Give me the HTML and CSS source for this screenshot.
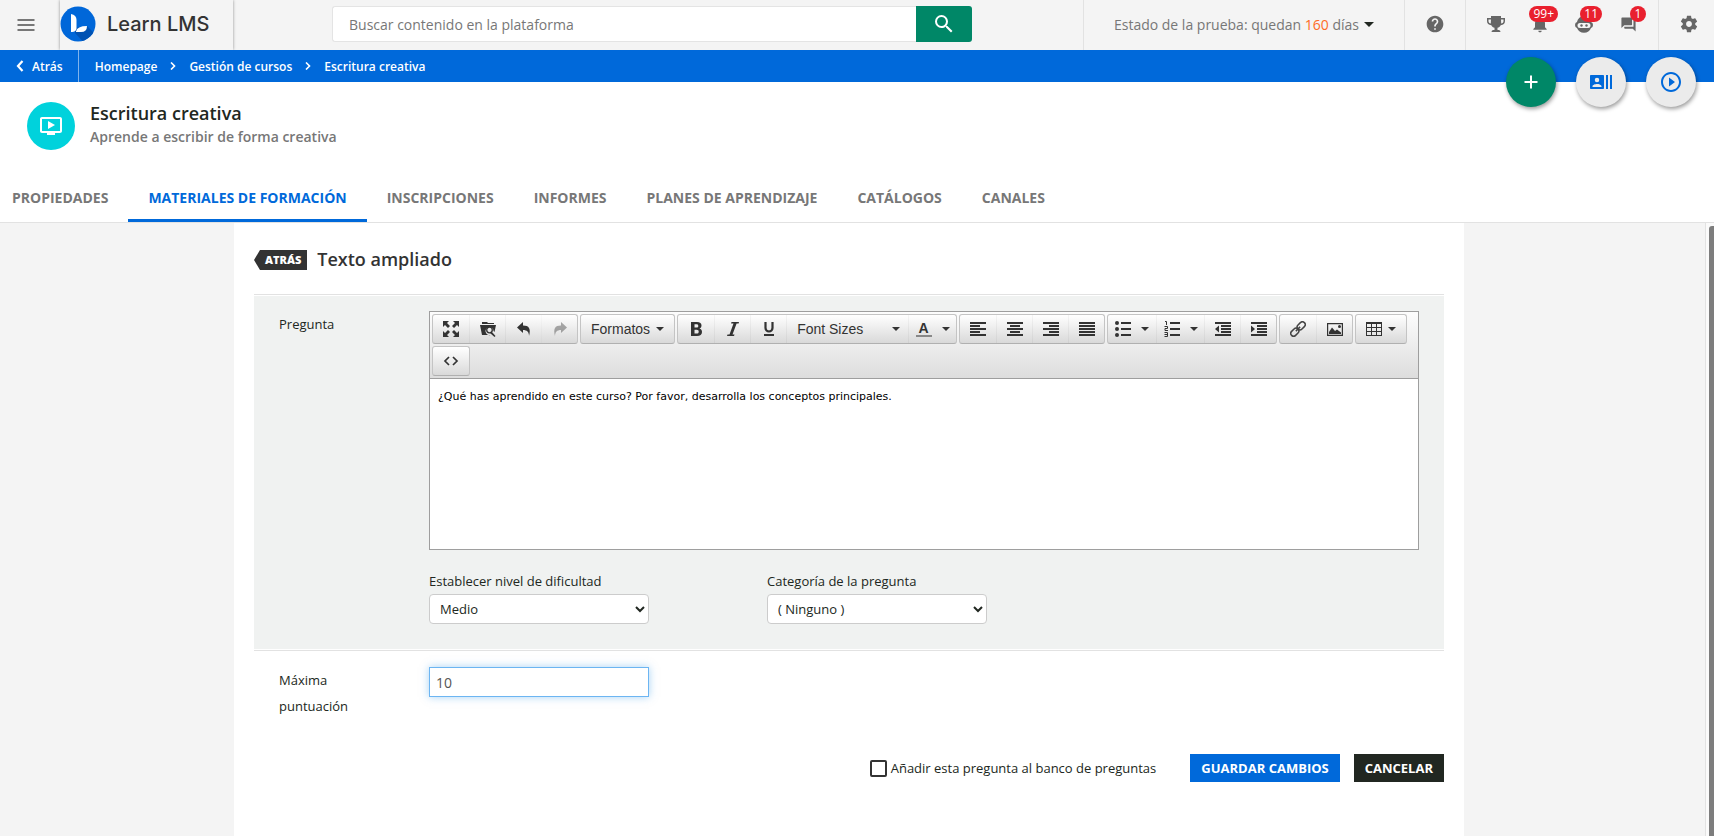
FILE: index.html
```html
<!DOCTYPE html>
<html lang="es">
<head>
  <meta charset="UTF-8" />
  <meta name="viewport" content="width=device-width, initial-scale=1.0"/>
  <title>Learn LMS - Escritura creativa</title>
  <link rel="stylesheet" href="styles.css">
</head>
<body>
  <header class="topbar">
    <button class="icon-btn menu-btn" type="button" aria-label="Menú">
      <svg width="24" height="24" viewBox="0 0 24 24"><path d="M3.500 18h17v-2h-17v2zm0-5h17v-2h-17v2zm0-7v2h17V6h-17z"/></svg>
    </button>
    <a class="logo" href="#">
      <svg width="36" height="36" viewBox="0 0 36 36">
        <defs><clipPath id="logoClip"><circle cx="18" cy="18" r="17.500"/></clipPath></defs>
        <circle cx="18" cy="18" r="17.500" fill="#0067d9"/>
        <path clip-path="url(#logoClip)" d="M15 22l12-2 12 12-10 10-14-15z" fill="#0052b3"/>
        <path d="M11 8q5.500 1 5.500 6v9q-1 3.500-5.500 3z" fill="#fff"/>
        <path d="M16 25.500q1-5.500 11-5.500 0 6-6 6h-5z" fill="#fff"/>
      </svg>
      <span>Learn LMS</span>
    </a>
    <form class="search">
      <input type="text" placeholder="Buscar contenido en la plataforma" aria-label="Buscar contenido en la plataforma">
      <button type="button" aria-label="Buscar">
        <svg width="24" height="24" viewBox="0 0 24 24"><path d="M15.500 14h-.79l-.28-.27A6.470 6.470 0 0 0 16 9.500 6.500 6.500 0 1 0 9.500 16c1.610 0 3.090-.59 4.230-1.570l.27.280v.790l5 4.990L20.490 19l-4.990-5zm-6 0C7.010 14 5 11.990 5 9.500S7.010 5 9.500 5 14 7.010 14 9.500 11.990 14 9.500 14z"/></svg>
      </button>
    </form>
    <button class="trial" type="button">
      <span>Estado de la prueba: quedan <b>160</b> días</span><i class="caret"></i>
    </button>
    <div class="top-group">
      <button class="icon-btn" type="button" aria-label="Ayuda">
        <svg width="20" height="20" viewBox="0 0 24 24"><path d="M12 2C6.480 2 2 6.480 2 12s4.480 10 10 10 10-4.480 10-10S17.520 2 12 2zm1 17h-2v-2h2v2zm2.070-7.750l-.9.920C13.450 12.900 13 13.500 13 15h-2v-.5c0-1.100.450-2.100 1.170-2.830l1.240-1.260c.370-.36.590-.86.590-1.410 0-1.100-.9-2-2-2s-2 .9-2 2H8c0-2.210 1.790-4 4-4s4 1.790 4 4c0 .880-.36 1.680-.93 2.250z"/></svg>
      </button>
    </div>
    <div class="top-group">
      <button class="icon-btn" type="button" aria-label="Logros">
        <svg width="18" height="18" viewBox="0 0 18 18"><path d="M4 1h10v2h4v3c0 2.500-1.600 4-4.300 4.200-.8 1.400-1.900 2.200-3.200 2.500V15H12q1.500.4 1.500 2h-9q0-1.600 1.500-2h1.500v-2.300c-1.300-.3-2.400-1.100-3.200-2.500C1.600 10 0 8.500 0 6V3h4V1zm0 3.500H1.500V6c0 1.400.8 2.300 2.300 2.600C3.700 7.400 4 6 4 4.500zm10 0c0 1.500.3 2.900.2 4.100 1.500-.3 2.300-1.200 2.300-2.600V4.500H14z"/></svg>
      </button>
      <button class="icon-btn" type="button" aria-label="Notificaciones">
        <svg width="20" height="20" viewBox="0 0 24 24"><path d="M12 22c1.100 0 2-.9 2-2h-4c0 1.100.9 2 2 2zm6-6v-5c0-3.070-1.630-5.640-4.500-6.320V4a1.500 1.500 0 0 0-3 0v.680C7.640 5.360 6 7.920 6 11v5l-2 2v1h16v-1l-2-2z"/></svg>
        <span class="badge">99+</span>
      </button>
      <button class="icon-btn" type="button" aria-label="Asistente">
        <svg width="18" height="18" viewBox="0 0 18 18"><path fill-rule="evenodd" d="M9 1a7 7 0 0 1 7 6q2 .5 2 3t-2 3a7.500 7.500 0 0 1-14 0q-2-.5-2-3t2-3a7 7 0 0 1 7-6zM5 8a2.500 2.500 0 0 0 0 5h8a2.500 2.500 0 0 0 0-5z"/><circle cx="6.500" cy="10.500" r="1.200"/><circle cx="11.500" cy="10.500" r="1.200"/></svg>
        <span class="badge">11</span>
      </button>
      <button class="icon-btn" type="button" aria-label="Mensajes">
        <svg width="17" height="17" viewBox="0 0 24 24"><path d="M21 6h-2v9H6v2c0 .550.450 1 1 1h11l4 4V7c0-.55-.45-1-1-1zm-4 6V3c0-.55-.45-1-1-1H3c-.55 0-1 .450-1 1v14l4-4h10c.550 0 1-.45 1-1z"/></svg>
        <span class="badge">1</span>
      </button>
    </div>
    <div class="top-group">
      <button class="icon-btn" type="button" aria-label="Configuración">
        <svg width="20" height="20" viewBox="0 0 24 24"><path d="M19.430 12.980c.04-.32.07-.64.07-.98s-.03-.66-.07-.98l2.110-1.650c.19-.15.24-.42.12-.64l-2-3.460c-.12-.22-.39-.3-.61-.22l-2.490 1c-.52-.4-1.080-.73-1.690-.98l-.38-2.650C14.460 2.180 14.250 2 14 2h-4c-.25 0-.46.180-.49.420l-.38 2.650c-.61.250-1.170.590-1.690.980l-2.490-1c-.23-.09-.49 0-.61.220l-2 3.460c-.13.220-.07.490.12.640l2.110 1.650c-.04.320-.07.650-.07.980s.03.660.07.980l-2.110 1.650c-.19.150-.24.420-.12.640l2 3.460c.12.220.39.300.61.220l2.490-1c.52.400 1.080.730 1.690.980l.38 2.650c.03.240.24.420.49.420h4c.25 0 .46-.18.49-.42l.38-2.650c.61-.25 1.170-.59 1.690-.98l2.490 1c.23.090.49 0 .61-.22l2-3.460c.12-.22.07-.49-.12-.64l-2.110-1.650zM12 15.500c-1.930 0-3.500-1.570-3.500-3.500s1.570-3.500 3.500-3.500 3.500 1.570 3.500 3.500-1.570 3.500-3.500 3.500z"/></svg>
      </button>
    </div>
  </header>

  <nav class="crumbs">
    <a class="crumb-back" href="#">
      <svg width="8" height="12" viewBox="0 0 8 12"><path d="M6.500 1L2 6l4.500 5" fill="none" stroke="#fff" stroke-width="2.200"/></svg>
      Atrás
    </a>
    <a href="#">Homepage</a>
    <svg width="6" height="8" viewBox="0 0 6 8"><path d="M1 .5L4.500 4 1 7.500" fill="none" stroke="#fff" stroke-width="1.600"/></svg>
    <a href="#">Gestión de cursos</a>
    <svg width="6" height="8" viewBox="0 0 6 8"><path d="M1 .5L4.500 4 1 7.500" fill="none" stroke="#fff" stroke-width="1.600"/></svg>
    <a href="#">Escritura creativa</a>
  </nav>

  <div class="fabs">
    <button class="fab fab-add" type="button" aria-label="Añadir">
      <svg width="24" height="24" viewBox="0 0 24 24"><path d="M18.500 13H13v5.500h-2V13H5.500v-2H11V5.500h2V11h5.500z"/></svg>
    </button>
    <button class="fab" type="button" aria-label="Usuarios">
      <svg width="24" height="24" viewBox="0 0 24 24"><path d="M21 5v14h2V5h-2zm-4 14h2V5h-2v14zM14 5H2c-.55 0-1 .450-1 1v12c0 .550.450 1 1 1h12c.550 0 1-.45 1-1V6c0-.55-.45-1-1-1zM8 7.750a2.250 2.250 0 1 1 0 4.500 2.250 2.250 0 0 1 0-4.500zM12.500 17h-9v-.75c0-1.500 3-2.250 4.500-2.250s4.500.750 4.500 2.250V17z"/></svg>
    </button>
    <button class="fab" type="button" aria-label="Reproducir">
      <svg width="24" height="24" viewBox="0 0 24 24"><path d="M10 16.500l6-4.500-6-4.500v9zM12 2C6.480 2 2 6.480 2 12s4.480 10 10 10 10-4.480 10-10S17.520 2 12 2zm0 18c-4.410 0-8-3.590-8-8s3.590-8 8-8 8 3.590 8 8-3.590 8-8 8z"/></svg>
    </button>
  </div>

  <section class="course">
    <div class="course-icon">
      <svg width="24" height="24" viewBox="0 0 24 24"><path d="M21 3H3c-1.110 0-2 .890-2 2v12c0 1.100.890 2 2 2h5v2h8v-2h5c1.100 0 2-.9 2-2V5c0-1.110-.9-2-2-2zm0 14H3V5h18v12zM9 7v8l7-4z"/></svg>
    </div>
    <div>
      <h1>Escritura creativa</h1>
      <p>Aprende a escribir de forma creativa</p>
    </div>
  </section>

  <nav class="tabs">
    <a href="#">PROPIEDADES</a>
    <a class="active" href="#">MATERIALES DE FORMACIÓN</a>
    <a href="#">INSCRIPCIONES</a>
    <a href="#">INFORMES</a>
    <a href="#">PLANES DE APRENDIZAJE</a>
    <a href="#">CATÁLOGOS</a>
    <a href="#">CANALES</a>
  </nav>

  <div class="page">
    <main class="card">
      <div class="card-title">
        <a class="back-tag" href="#">ATRÁS</a>
        <h2>Texto ampliado</h2>
      </div>

      <form>
        <div class="row row-gray">
          <label class="row-label" for="question">Pregunta</label>
          <div class="row-body">
            <div class="editor">
              <div class="toolbar">
                <div class="tb-group">
                  <button type="button" aria-label="Pantalla completa"><svg width="18" height="18" viewBox="0 0 18 18"><path d="M1 1h6L5 3l3 3-2 2-3-3-2 2zM17 1v6l-2-2-3 3-2-2 3-3-2-2zM1 17v-6l2 2 3-3 2 2-3 3 2 2zM17 17h-6l2-2-3-3 2-2 3 3 2-2z"/></svg></button>
                  <button type="button" aria-label="Examinar"><svg width="18" height="18" viewBox="0 0 18 18"><path d="M3 2h5l1 1h6v1H3zM1 5h16l-1.500 7-1-1a4 4 0 1 0-3 4H3z"/><circle cx="10.500" cy="10" r="2.800" fill="none" stroke="#333" stroke-width="1.300"/><path d="M12.500 11.500l4 4.500-1 1-4.500-4z"/></svg></button>
                  <button type="button" aria-label="Deshacer"><svg width="18" height="18" viewBox="0 0 18 18"><path d="M8 2v3.500c6 0 8 3 6 10.500 0-4-2-6-6-6V13L2 7.500z"/></svg></button>
                  <button type="button" aria-label="Rehacer" disabled><svg width="18" height="18" viewBox="0 0 18 18"><path d="M10 2v3.500c-6 0-8 3-6 10.500 0-4 2-6 6-6V13l6-5.500z"/></svg></button>
                </div>
                <div class="tb-group">
                  <button class="tb-text" type="button">Formatos <i class="caret"></i></button>
                </div>
                <div class="tb-group">
                  <button type="button" aria-label="Negrita"><svg width="16" height="16" viewBox="0 0 16 16"><path fill-rule="evenodd" d="M3 1h6c3 0 4.500 1.300 4.500 3.600 0 1.500-.7 2.500-2 3 1.600.5 2.500 1.600 2.500 3.400C14 13.700 12.200 15 9 15H3zm3.500 2.300v3.300h2c1.200 0 1.800-.6 1.800-1.700s-.6-1.600-1.800-1.600zm0 5.500v3.800h2.200c1.300 0 2-.7 2-1.900s-.7-1.900-2-1.900z"/></svg></button>
                  <button type="button" aria-label="Cursiva"><svg width="16" height="16" viewBox="0 0 16 16"><path d="M6.500 1H14l-.4 1.500h-2L7.500 13.500h2L9 15H2l.5-1.500h2L8.500 2.500h-2.400z"/></svg></button>
                  <button type="button" aria-label="Subrayado"><svg width="16" height="16" viewBox="0 0 16 16"><path d="M4.500 1v6a3.500 3.500 0 0 0 7 0V1" fill="none" stroke="#333" stroke-width="2.200"/><path d="M3 13h10v2H3z"/></svg></button>
                  <button class="tb-text tb-sizes" type="button">Font Sizes <i class="caret"></i></button>
                  <button class="tb-split" type="button" aria-label="Color"><span class="letter-a">A</span><i class="caret"></i></button>
                </div>
                <div class="tb-group">
                  <button type="button" aria-label="Izquierda"><svg width="16" height="16" viewBox="0 0 16 16"><path d="M0 1h16v2H0zm0 3h10v2H0zm0 3h16v2H0zm0 3h10v2H0zm0 3h16v2H0z"/></svg></button>
                  <button type="button" aria-label="Centro"><svg width="16" height="16" viewBox="0 0 16 16"><path d="M0 1h16v2H0zm3 3h10v2H3zM0 7h16v2H0zm3 3h10v2H3zm-3 3h16v2H0z"/></svg></button>
                  <button type="button" aria-label="Derecha"><svg width="16" height="16" viewBox="0 0 16 16"><path d="M0 1h16v2H0zm6 3h10v2H6zM0 7h16v2H0zm6 3h10v2H6zm-6 3h16v2H0z"/></svg></button>
                  <button type="button" aria-label="Justificar"><svg width="16" height="16" viewBox="0 0 16 16"><path d="M0 1h16v2H0zm0 3h16v2H0zm0 3h16v2H0zm0 3h16v2H0zm0 3h16v2H0z"/></svg></button>
                </div>
                <div class="tb-group">
                  <button class="tb-split" type="button" aria-label="Lista"><svg width="16" height="16" viewBox="0 0 16 16"><circle cx="2" cy="2" r="2"/><circle cx="2" cy="8" r="2"/><circle cx="2" cy="14" r="2"/><path d="M6 1h10v2H6zm0 6h10v2H6zm0 6h10v2H6z"/></svg><i class="caret"></i></button>
                  <button class="tb-split" type="button" aria-label="Lista numerada"><svg width="16" height="16" viewBox="0 0 16 16"><path d="M6 1h10v2H6zm0 6h10v2H6zm0 6h10v2H6z"/><path d="M1 .5h1.500V4M.5 5.500h3v2h-2.500v2h3M.5 11.500h3v4h-3m0-2h3" fill="none" stroke="#333"/></svg><i class="caret"></i></button>
                  <button type="button" aria-label="Reducir sangría"><svg width="16" height="16" viewBox="0 0 16 16"><path d="M0 1h16v2H0zm6 3h10v2H6zm0 3h10v2H6zm0 3h10v2H6zm-6 3h16v2H0zM4 4.500v7L0 8z"/></svg></button>
                  <button type="button" aria-label="Aumentar sangría"><svg width="16" height="16" viewBox="0 0 16 16"><path d="M0 1h16v2H0zm6 3h10v2H6zm0 3h10v2H6zm0 3h10v2H6zm-6 3h16v2H0zM0 4.500v7L4 8z"/></svg></button>
                </div>
                <div class="tb-group">
                  <button type="button" aria-label="Enlace"><svg width="16" height="16" viewBox="0 0 16 16"><g transform="rotate(-45 8 8)" fill="none" stroke="#444" stroke-width="1.500"><rect x="-1" y="5.200" width="9" height="5.600" rx="2.800"/><rect x="8" y="5.200" width="9" height="5.600" rx="2.800"/><path d="M5 8h6"/></g></svg></button>
                  <button type="button" aria-label="Imagen"><svg width="16" height="16" viewBox="0 0 16 16"><path fill-rule="evenodd" d="M0 2h16v13H0zm1.200 1.200v10.600h13.600V3.200z"/><path d="M2 13V11l3-4.500L8 10l2-1.500 4 3V13z"/><circle cx="12.500" cy="5.500" r="1.500"/></svg></button>
                </div>
                <div class="tb-group">
                  <button class="tb-split tb-table" type="button" aria-label="Tabla"><svg width="16" height="16" viewBox="0 0 16 16"><path fill-rule="evenodd" d="M0 1h16v14H0zm1 2v3h4V3zm5 0v3h4V3zm5 0v3h4V3zM1 7v3h4V7zm5 0v3h4V7zm5 0v3h4V7zM1 11v3h4v-3zm5 0v3h4v-3zm5 0v3h4v-3z"/></svg><i class="caret"></i></button>
                </div>
                <div class="tb-group">
                  <button type="button" aria-label="Código fuente"><svg width="16" height="16" viewBox="0 0 16 16"><path d="M6 4L2 8l4 4M10 4l4 4-4 4" fill="none" stroke="#333" stroke-width="1.700"/></svg></button>
                </div>
              </div>
              <textarea id="question">¿Qué has aprendido en este curso? Por favor, desarrolla los conceptos principales.</textarea>
            </div>
            <div class="selects">
              <div class="field">
                <label for="level">Establecer nivel de dificultad</label>
                <select id="level">
                  <option>Medio</option>
                </select>
              </div>
              <div class="field">
                <label for="category">Categoría de la pregunta</label>
                <select id="category">
                  <option>( Ninguno )</option>
                </select>
              </div>
            </div>
          </div>
        </div>

        <div class="row">
          <label class="row-label" for="score">Máxima puntuación</label>
          <div class="row-body">
            <input class="score" id="score" type="text" value="10">
          </div>
        </div>

        <div class="actions">
          <label class="bank"><input type="checkbox"> Añadir esta pregunta al banco de preguntas</label>
          <button class="btn btn-save" type="button">GUARDAR CAMBIOS</button>
          <button class="btn btn-cancel" type="button">CANCELAR</button>
        </div>
      </form>
    </main>
    <div class="scroll-track"><div class="scroll-thumb"></div></div>
  </div>
</body>
</html>
```

FILE: styles.css
```css
* {
  margin: 0;
  padding: 0;
  box-sizing: border-box;
}

body {
  font-family: 'Open Sans', sans-serif;
  font-size: 13px;
  color: #212721;
  background-color: #fff;
  min-height: 100vh;
  display: flex;
  flex-direction: column;
  position: relative;
}

a {
  color: inherit;
  text-decoration: none;
}

button {
  font-family: inherit;
  border: none;
  background: none;
  cursor: pointer;
}

svg {
  display: block;
  flex: none;
}

.caret {
  border: 4px solid transparent;
  border-top-color: currentColor;
  border-bottom: none;
}

/* top bar */
.topbar {
  height: 50px;
  display: flex;
  align-items: center;
  background-color: #f4f4f4;
}

.icon-btn {
  position: relative;
  width: 44px;
  height: 48px;
  display: flex;
  align-items: center;
  justify-content: center;
  fill: #666;
}

.menu-btn {
  margin: 0 7px 0 4px;
  fill: #777;
}

.logo {
  width: 173px;
  height: 50px;
  margin-left: 5px;
  padding-bottom: 2px;
  display: flex;
  align-items: center;
  gap: 11px;
  font-family: Inter, sans-serif;
  font-size: 20px;
  font-weight: 500;
  color: #333;
  box-shadow: 0 0 3px rgba(0, 0, 0, 0.4);
}

.search {
  flex: 1;
  max-width: 640px;
  height: 36px;
  margin: 0 20px 2px 99px;
  display: flex;
}

.search input {
  flex: 1;
  min-width: 0;
  padding: 0 16px;
  border: 1px solid #e4e4e4;
  border-right: none;
  border-radius: 3px 0 0 3px;
  font-family: inherit;
  font-size: 14px;
  outline: none;
}

.search input::placeholder {
  color: #777;
}

.search button {
  width: 56px;
  display: flex;
  align-items: center;
  justify-content: center;
  background-color: #008767;
  border-radius: 0 3px 3px 0;
  fill: #fff;
}

.trial {
  height: 50px;
  margin-left: auto;
  padding: 0 30px 2px;
  display: flex;
  align-items: center;
  gap: 5px;
  border-left: 1px solid #e2e2e2;
  font-size: 14px;
  color: #777;
  white-space: nowrap;
}

.trial b {
  font-weight: 400;
  color: #ff6b26;
}

.trial .caret {
  border-width: 5px 5px 0;
  color: #212721;
}

.top-group {
  height: 50px;
  padding: 0 8px;
  display: flex;
  border-left: 1px solid #e2e2e2;
}

.top-group:last-child {
  padding-right: 3px;
}

.badge {
  position: absolute;
  top: 6px;
  right: 4px;
  min-width: 16px;
  height: 16px;
  padding: 0 4px;
  border-radius: 8px;
  background-color: #e9202e;
  color: #fff;
  font-size: 12px;
  line-height: 16px;
}

/* breadcrumbs */
.crumbs {
  height: 32px;
  display: flex;
  align-items: center;
  gap: 13px;
  background-color: #0069da;
  color: #fff;
  font-size: 12px;
  font-weight: 600;
}

.crumb-back {
  height: 32px;
  margin-right: 3px;
  padding: 0 15px 0 16px;
  display: flex;
  align-items: center;
  gap: 8px;
  border-right: 1px solid #80b4ed;
}

.fabs {
  position: absolute;
  top: 57px;
  right: 18px;
  display: flex;
  gap: 20px;
}

.fab {
  width: 50px;
  height: 50px;
  display: flex;
  align-items: center;
  justify-content: center;
  border-radius: 50%;
  background-color: #ebebeb;
  box-shadow: 1px 2px 4px rgba(0, 0, 0, 0.4);
  fill: #0069da;
}

.fab-add {
  background-color: #008767;
  fill: #fff;
}

/* course header */
.course {
  height: 96px;
  padding: 20px 27px;
  display: flex;
  align-items: flex-start;
  gap: 15px;
}

.course-icon {
  width: 48px;
  height: 48px;
  display: flex;
  align-items: center;
  justify-content: center;
  border-radius: 50%;
  background-color: #00d2dc;
  fill: #fff;
}

.course h1 {
  margin-bottom: 2px;
  font-size: 18px;
  font-weight: 600;
  line-height: 22px;
}

.course p {
  font-size: 14px;
  font-weight: 600;
  line-height: 22px;
  color: #777;
}

.tabs {
  height: 45px;
  display: flex;
  border-bottom: 1px solid #e2e2e2;
}

.tabs a {
  height: 44px;
  padding: 10px 20px 0;
  font-size: 14px;
  font-weight: 700;
  line-height: 20px;
  color: #777;
}

.tabs a:first-child {
  padding-left: 12px;
}

.tabs .active {
  color: #0069da;
  border-bottom: 3px solid #0069da;
}

/* content */
.page {
  flex: 1;
  display: flex;
  background-color: #f4f4f4;
}

.card {
  flex: 1;
  max-width: 1230px;
  margin: 0 auto;
  padding: 20px;
  background-color: #fff;
}

.scroll-track {
  width: 9px;
  margin-left: 7px;
  padding: 3px 0 0 3px;
  background-color: #fafafa;
  border-left: 1px solid #e2e2e2;
}

.scroll-thumb {
  height: 100%;
  border-radius: 3px 0 0 0;
  background-color: #7d7d7d;
}

.card-title {
  height: 51px;
  display: flex;
  align-items: flex-start;
  gap: 10px;
}

.back-tag {
  margin-top: 7px;
  padding: 0 6px 0 11px;
  background-color: #333;
  clip-path: polygon(6px 0, 100% 0, 100% 100%, 6px 100%, 0 50%);
  color: #fff;
  font-size: 11px;
  font-weight: 800;
  line-height: 20px;
}

.card-title h2 {
  font-size: 18px;
  font-weight: 600;
  line-height: 32px;
  color: #333;
}

.row {
  padding: 16px 25px;
  display: flex;
  line-height: 26px;
}

.row-gray {
  border-top: 1px solid #e2e2e2;
  border-bottom: 1px solid #e2e2e2;
  background-color: #f0f2f1;
  box-shadow: inset 0 1px #fff, inset 0 -1px #fff;
  padding-bottom: 26px;
}

.row-label {
  width: 100px;
  margin-right: 50px;
  flex: none;
}

.row-body {
  flex: 1;
  min-width: 0;
}

.editor {
  border: 1px solid #9e9e9e;
}

.toolbar {
  padding: 2px;
  display: flex;
  flex-wrap: wrap;
  gap: 2px;
  background-image: linear-gradient(#fdfdfd, #ddd);
  border-bottom: 1px solid #9e9e9e;
}

.tb-group {
  display: flex;
  border: 1px solid #c4c4c4;
  border-bottom-color: #b0b0b0;
  border-radius: 3px;
  background-image: linear-gradient(#fff, #d9d9d9);
}

.tb-group button {
  width: 36px;
  height: 28px;
  display: flex;
  align-items: center;
  justify-content: center;
  fill: #333;
  color: #333;
}

.tb-group button + button {
  border-left: 1px solid rgba(0, 0, 0, 0.04);
}

.tb-group button:disabled {
  opacity: 0.4;
}

.tb-group .tb-text {
  width: auto;
  padding: 0 10px;
  gap: 6px;
  font-family: 'Liberation Sans', sans-serif;
  font-size: 14px;
}

.tb-group .tb-sizes {
  width: 122px;
  justify-content: space-between;
  padding-right: 8px;
}

.tb-group .tb-split {
  width: 48px;
  gap: 10px;
}

.tb-group .tb-table {
  width: 50px;
  gap: 6px;
}

.letter-a {
  width: 16px;
  border-bottom: 2px solid #888;
  font-family: 'Liberation Sans', sans-serif;
  font-size: 14px;
  font-weight: 700;
  line-height: 14px;
}

.editor textarea {
  display: block;
  width: 100%;
  height: 170px;
  padding: 9px 8px;
  border: none;
  outline: none;
  resize: none;
  font-family: 'DejaVu Sans', sans-serif;
  font-size: 11px;
  line-height: 18px;
  color: #000;
}

.selects {
  margin-top: 18px;
  display: flex;
  gap: 118px;
}

.field {
  width: 220px;
}

.field label {
  display: block;
}

.field select {
  display: block;
  width: 100%;
  height: 30px;
  padding: 0 6px;
  border: 1px solid #ccc;
  border-radius: 4px;
  background-color: #fff;
  color: #212721;
  font-family: inherit;
  font-size: 13px;
}

.score {
  display: block;
  width: 220px;
  height: 30px;
  padding: 0 6px;
  border: 1px solid #6cb5f2;
  outline: none;
  box-shadow: 0 0 8px rgba(82, 168, 236, 0.5);
  font-family: inherit;
  font-size: 14px;
  color: #555;
}

.actions {
  margin-top: 19px;
  display: flex;
  align-items: center;
  justify-content: flex-end;
  gap: 14px;
}

.bank {
  margin-right: 20px;
  display: flex;
  align-items: center;
  gap: 4px;
}

.bank input {
  appearance: none;
  width: 17px;
  height: 17px;
  border: 2px solid #333;
  border-radius: 2px;
}

.btn {
  height: 28px;
  padding: 0 11px;
  color: #fff;
  font-size: 13px;
  font-weight: 700;
}

.btn-save {
  background-color: #0069da;
}

.btn-cancel {
  background-color: #212721;
}
```
